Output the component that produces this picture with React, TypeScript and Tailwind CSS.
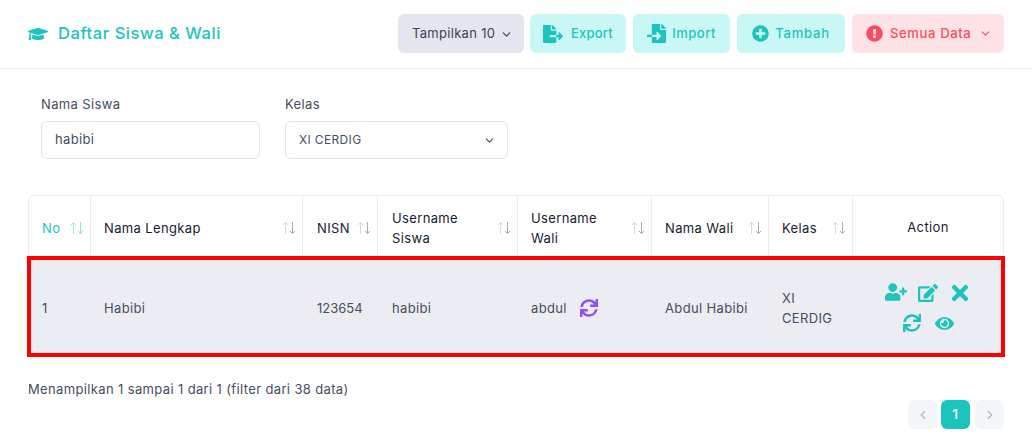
import { ChevronDown, ChevronLeft, ChevronRight } from 'lucide-react';
import {
  FaEdit,
  FaExclamationCircle,
  FaEye,
  FaFileExport,
  FaFileImport,
  FaGraduationCap,
  FaPlusCircle,
  FaSync,
  FaTimes,
  FaUserPlus,
} from 'react-icons/fa';

function SortIcon({ active = false }: { active?: boolean }) {
  return (
    <svg width="14" height="14" viewBox="0 0 14 14" fill="none" strokeWidth="1" className="shrink-0">
      <path d="M3.5 13V1.5M1 4l2.5-2.5L6 4" stroke={active ? '#a4ebe7' : '#d5d7e2'} />
      <path d="M10.5 1v11.5M8 10l2.5 2.5L13 10" stroke={active ? '#8ce5e0' : '#a9abbb'} />
    </svg>
  );
}

function HeadCell({ width, children, active = false, indent = false }: { width: string; children: React.ReactNode; active?: boolean; indent?: boolean }) {
  return (
    <th className={`${width} border-r border-[#ebedf3] ${indent ? 'pl-[14px]' : 'pl-[13px]'} pr-[6px] pt-[2px] text-left font-normal`}>
      <div className="flex items-center justify-between gap-1">
        <span className={`leading-[20px] ${active ? 'text-[#1bc5bd]' : 'text-[#181c32]'}`}>{children}</span>
        <SortIcon active={active} />
      </div>
    </th>
  );
}

export default function App() {
  return (
    <div className="h-[444px] w-[1032px] overflow-hidden bg-white text-[13px] tracking-[0.36px] text-[#464e5f] [font-family:Inter,sans-serif]">
      {/* Header */}
      <header className="flex h-[69px] items-center justify-between border-b border-[#ebedf3] px-[28px] pb-[1px]">
        <h1 className="flex items-center gap-[10px] text-[16.5px] font-medium tracking-[0.55px] text-[#1bc5bd]">
          <FaGraduationCap size={20} />
          Daftar Siswa &amp; Wali
        </h1>
        <div className="flex h-[39px] gap-[7px] font-medium">
          <button className="-mr-[1px] flex w-[126px] items-center gap-[5px] rounded-md bg-[#e4e6ef] pl-[14px] pt-[1px] font-normal tracking-[0.3px] text-[#3f4254]">
            Tampilkan 10 <ChevronDown size={13} />
          </button>
          <button className="flex w-[96px] items-center justify-center gap-[8px] rounded-md bg-[#c9f7f5] tracking-[0.2px] text-[#1bc5bd]">
            <FaFileExport size={20} /> <span className="pt-[1px]">Export</span>
          </button>
          <button className="flex w-[97px] items-center justify-center gap-[6px] rounded-md bg-[#c9f7f5] tracking-[0.5px] text-[#1bc5bd]">
            <FaFileImport size={19} /> <span className="pt-[1px]">Import</span>
          </button>
          <button className="flex w-[108px] items-center justify-center gap-[6px] rounded-md bg-[#c9f7f5] tracking-[0.8px] text-[#1bc5bd]">
            <FaPlusCircle size={17} /> <span className="pt-[1px]">Tambah</span>
          </button>
          <button className="flex w-[152px] items-center gap-[7px] rounded-md bg-[#ffe2e5] pl-[14px] tracking-[0.65px] text-[#f64e60]">
            <FaExclamationCircle size={17} /> <span className="pt-[1px]">Semua Data</span> <ChevronDown size={13} className="ml-[1px]" />
          </button>
        </div>
      </header>

      {/* Filter */}
      <section className="flex gap-[25px] px-[41px] pt-[26px]">
        <label className="block w-[219px]">
          <span className="mb-[8px] block leading-[18px]">Nama Siswa</span>
          <div className="flex h-[38px] items-center rounded-md border border-[#e4e6ef] px-[13px]">habibi</div>
        </label>
        <label className="block w-[223px]">
          <span className="mb-[8px] block leading-[18px]">Kelas</span>
          <div className="flex h-[38px] items-center justify-between rounded-md border border-[#e4e6ef] pl-[13px] pr-[11px] text-[12px] tracking-[0.35px]">
            XI CERDIG <ChevronDown size={13} />
          </div>
        </label>
      </section>

      {/* Table */}
      <section className="px-[28px] pt-[36px]">
        <table className="w-[976px] table-fixed border-separate border-spacing-0 rounded-t-md border-l border-r border-t border-[#ebedf3]">
          <thead>
            <tr className="h-[62px]">
              <HeadCell width="w-[62px]" active>No</HeadCell>
              <HeadCell width="w-[212px]">Nama Lengkap</HeadCell>
              <HeadCell width="w-[75px]" indent>NISN</HeadCell>
              <HeadCell width="w-[140px]" indent>Username Siswa</HeadCell>
              <HeadCell width="w-[134px]">Username Wali</HeadCell>
              <HeadCell width="w-[117px]">Nama Wali</HeadCell>
              <HeadCell width="w-[84px]">Kelas</HeadCell>
              <th className="pt-[2px] text-center font-normal text-[#181c32]">Action</th>
            </tr>
          </thead>
          <tbody>
            <tr className="h-[97px] bg-[#ebedf3] outline-[4px] outline-offset-[-2px] outline-[#ff0000] [&>td]:px-[13px] [&>td]:pt-[5px]">
              <td>1</td>
              <td>Habibi</td>
              <td className="!pl-[14px] tracking-normal">123654</td>
              <td className="!pl-[14px]">habibi</td>
              <td>
                <div className="flex items-center gap-[13px]">
                  abdul <FaSync size={18} className="-mt-[2px] text-[#8950fc]" />
                </div>
              </td>
              <td>Abdul Habibi</td>
              <td className="!pt-[3px] leading-[20px]">XI CERDIG</td>
              <td className="!pt-0">
                <div className="flex flex-wrap items-center justify-center gap-x-[10px] gap-y-[9px] text-[#1bc5bd]">
                  <FaUserPlus size={22} className="-translate-y-px" />
                  <FaEdit size={20} className="translate-x-px" />
                  <FaTimes size={24} className="translate-x-px" />
                  <div className="flex w-full justify-center gap-[14px]">
                    <FaSync size={18} />
                    <FaEye size={19} />
                  </div>
                </div>
              </td>
            </tr>
          </tbody>
        </table>
      </section>

      {/* Footer */}
      <footer className="px-[28px] pt-[24px]">
        <p className="leading-[20px]">Menampilkan 1 sampai 1 dari 1 (filter dari 38 data)</p>
        <nav className="mt-[1px] flex justify-end gap-[4px]">
          <span className="mr-[1px] flex h-[29px] w-[29px] items-center justify-center rounded-md bg-[#f3f6f9] text-[#b5b5c3]">
            <ChevronLeft size={14} />
          </span>
          <span className="-ml-[1px] mr-[1px] flex h-[29px] w-[29px] items-center justify-center rounded-md bg-[#1bc5bd] font-semibold text-white">1</span>
          <span className="flex h-[29px] w-[29px] items-center justify-center rounded-md bg-[#f3f6f9] text-[#b5b5c3]">
            <ChevronRight size={14} />
          </span>
        </nav>
      </footer>
    </div>
  );
}
